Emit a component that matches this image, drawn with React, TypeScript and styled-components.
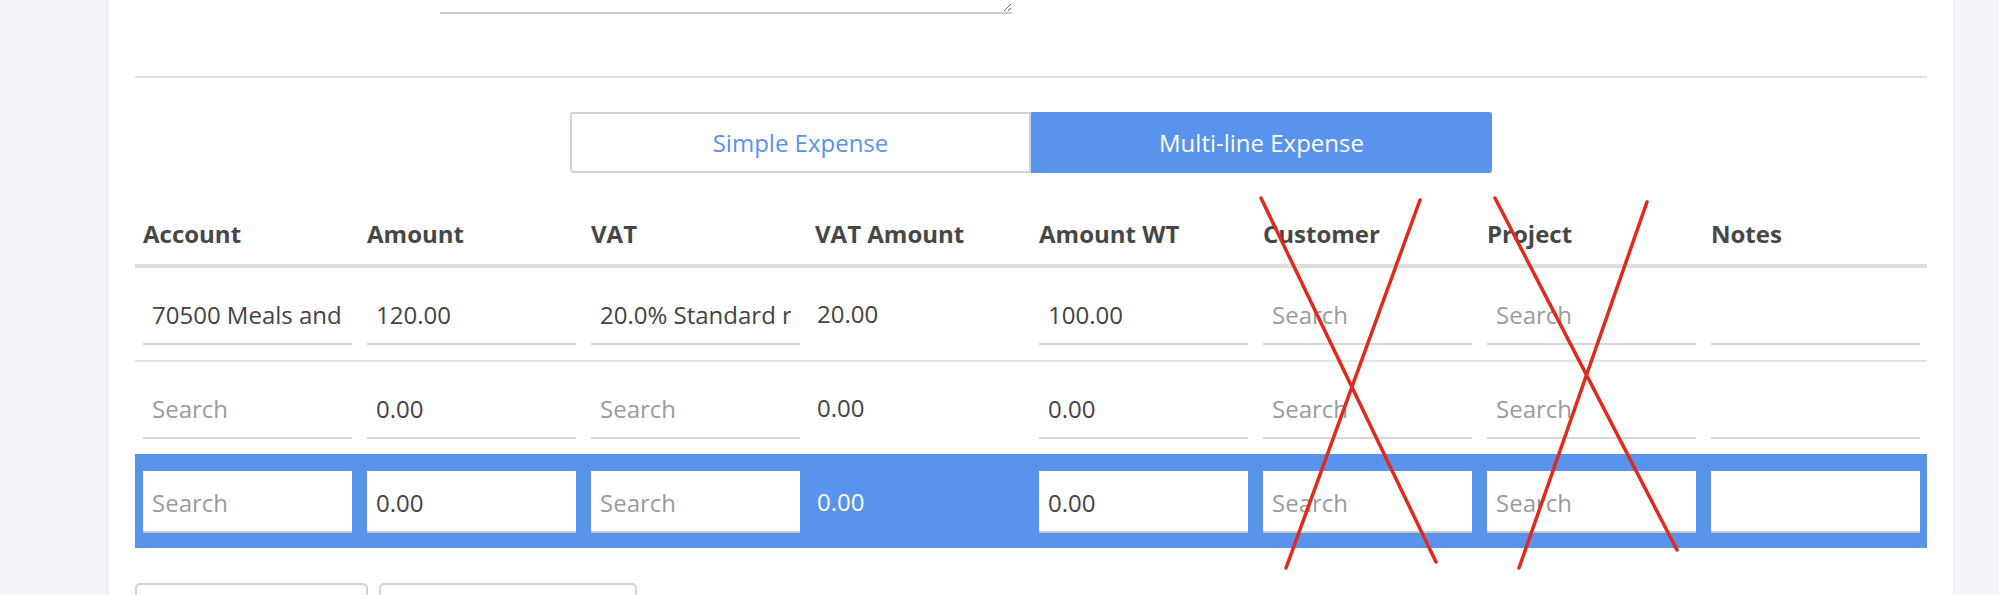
import styled, { createGlobalStyle } from "styled-components";

const GlobalStyle = createGlobalStyle`
  html, body {
    margin: 0;
    padding: 0;
    background: #f4f5f9;
    overflow: hidden;
  }
  body {
    font-family: "Open Sans", "Liberation Sans", sans-serif;
    color: #4a4a4a;
  }
`;

const blue = "#5893ed";

const Page = styled.div`
  position: relative;
  width: 1999px;
  height: 595px;
  overflow: hidden;
  padding: 0 44px 0 107px;
  box-sizing: border-box;
`;

const Panel = styled.div`
  margin-top: -100px;
  background: #ffffff;
  border-left: 1px solid #e6e7ec;
  border-right: 1px solid #e6e7ec;
  padding: 0 27px 40px;
  box-sizing: border-box;
  height: 800px;
`;

const FormRow = styled.div`
  display: grid;
  grid-template-columns: 305px 572px;
  padding-top: 20px;
`;

const Notes = styled.textarea`
  height: 94px;
  box-sizing: border-box;
  border: none;
  border-bottom: 2px solid #cfcfcf;
  resize: both;
  font: inherit;
  outline: none;
`;

const Divider = styled.hr`
  margin: 62px 0 0;
  border: none;
  height: 2px;
  background: #e3e3e3;
`;

const Toggle = styled.div`
  display: flex;
  justify-content: center;
  margin-top: 34px;
`;

const ToggleBtn = styled.button<{ $active?: boolean; $side: "left" | "right" }>`
  width: 461px;
  height: 61px;
  box-sizing: border-box;
  font-family: "Open Sans", "Liberation Sans", sans-serif;
  font-size: 24px;
  cursor: pointer;
  border: 2px solid ${(p) => (p.$active ? blue : "#d2d2d2")};
  background: ${(p) => (p.$active ? blue : "#ffffff")};
  color: ${(p) => (p.$active ? "#ffffff" : blue)};
  border-radius: ${(p) => (p.$side === "left" ? "3px 0 0 3px" : "0 3px 3px 0")};
`;

const Table = styled.div`
  margin-top: 44px;
`;

const Row = styled.div<{ $head?: boolean; $active?: boolean; $first?: boolean }>`
  display: grid;
  grid-template-columns: repeat(8, 1fr);
  align-items: center;
  padding: ${(p) => (p.$head ? "0 0 14px" : "15px 0 15px")};
  background: ${(p) => (p.$active ? blue : "transparent")};
  border-top: ${(p) => (p.$head || p.$first ? "none" : `2px solid ${p.$active ? blue : "#e4e4e4"}`)};
  border-bottom: ${(p) => (p.$head ? "4px solid #dedede" : "none")};
`;

const HeadCell = styled.div`
  padding: 0 8px;
  font-size: 24px;
  font-weight: 700;
  line-height: 33px;
  color: #474747;
  white-space: nowrap;
`;

const Cell = styled.div`
  padding: 0 7px 0 8px;
`;

const TextCell = styled.div<{ $active?: boolean }>`
  padding: 0 10px;
  font-size: 24px;
  color: ${(p) => (p.$active ? "#ffffff" : "#444444")};
  margin-top: -2px;
`;

const Field = styled.input<{ $active?: boolean }>`
  display: block;
  width: 100%;
  height: 62px;
  box-sizing: border-box;
  border: none;
  border-bottom: 2px solid ${(p) => (p.$active ? "#c9c9c9" : "#d7d7d7")};
  padding: 2px 9px 0;
  font-family: "Open Sans", "Liberation Sans", sans-serif;
  font-size: 24px;
  color: #444444;
  background: ${(p) => (p.$active ? "#ffffff" : "transparent")};
  outline: none;
  &::placeholder {
    color: #9c9c9c;
  }
`;

const Actions = styled.div`
  display: flex;
  gap: 11px;
  margin-top: 35px;
`;

const ActionBtn = styled.button<{ $w: number }>`
  width: ${(p) => p.$w}px;
  height: 50px;
  background: #fff;
  border: 2px solid #d4d4d4;
  border-radius: 5px;
`;

const Marks = styled.svg`
  position: absolute;
  top: 0;
  left: 0;
  pointer-events: none;
`;

const headers = ["Account", "Amount", "VAT", "VAT Amount", "Amount WT", "Customer", "Project", "Notes"];

type Line = { account: string; amount: string; vat: string; vatAmount: string; amountWt: string };

const lines: Line[] = [
  { account: "70500 Meals and", amount: "120.00", vat: "20.0% Standard r", vatAmount: "20.00", amountWt: "100.00" },
  { account: "", amount: "0.00", vat: "", vatAmount: "0.00", amountWt: "0.00" },
  { account: "", amount: "0.00", vat: "", vatAmount: "0.00", amountWt: "0.00" },
];

const App = () => {
  return (
    <Page>
      <GlobalStyle />
      <Panel>
        <FormRow>
          <div />
          <Notes />
        </FormRow>
        <Divider />
        <Toggle>
          <ToggleBtn $side="left">Simple Expense</ToggleBtn>
          <ToggleBtn $side="right" $active>
            Multi-line Expense
          </ToggleBtn>
        </Toggle>
        <Table>
          <Row $head>
            {headers.map((h) => (
              <HeadCell key={h}>{h}</HeadCell>
            ))}
          </Row>
          {lines.map((line, i) => {
            const active = i === lines.length - 1;
            return (
              <Row key={i} $first={i === 0} $active={active}>
                <Cell>
                  <Field $active={active} defaultValue={line.account} placeholder="Search" />
                </Cell>
                <Cell>
                  <Field $active={active} defaultValue={line.amount} />
                </Cell>
                <Cell>
                  <Field $active={active} defaultValue={line.vat} placeholder="Search" />
                </Cell>
                <TextCell $active={active}>{line.vatAmount}</TextCell>
                <Cell>
                  <Field $active={active} defaultValue={line.amountWt} />
                </Cell>
                <Cell>
                  <Field $active={active} placeholder="Search" />
                </Cell>
                <Cell>
                  <Field $active={active} placeholder="Search" />
                </Cell>
                <Cell>
                  <Field $active={active} />
                </Cell>
              </Row>
            );
          })}
        </Table>
        <Actions>
          <ActionBtn $w={233} />
          <ActionBtn $w={258} />
        </Actions>
      </Panel>
      <Marks width="1999" height="595" viewBox="0 0 1999 595">
        <g stroke="#e02a1b" strokeWidth="3.5" strokeLinecap="round">
          <line x1="1261" y1="198" x2="1436" y2="562" />
          <line x1="1420" y1="200" x2="1286" y2="568" />
          <line x1="1495" y1="198" x2="1677" y2="550" />
          <line x1="1647" y1="202" x2="1519" y2="568" />
        </g>
      </Marks>
    </Page>
  );
};

export default App;
